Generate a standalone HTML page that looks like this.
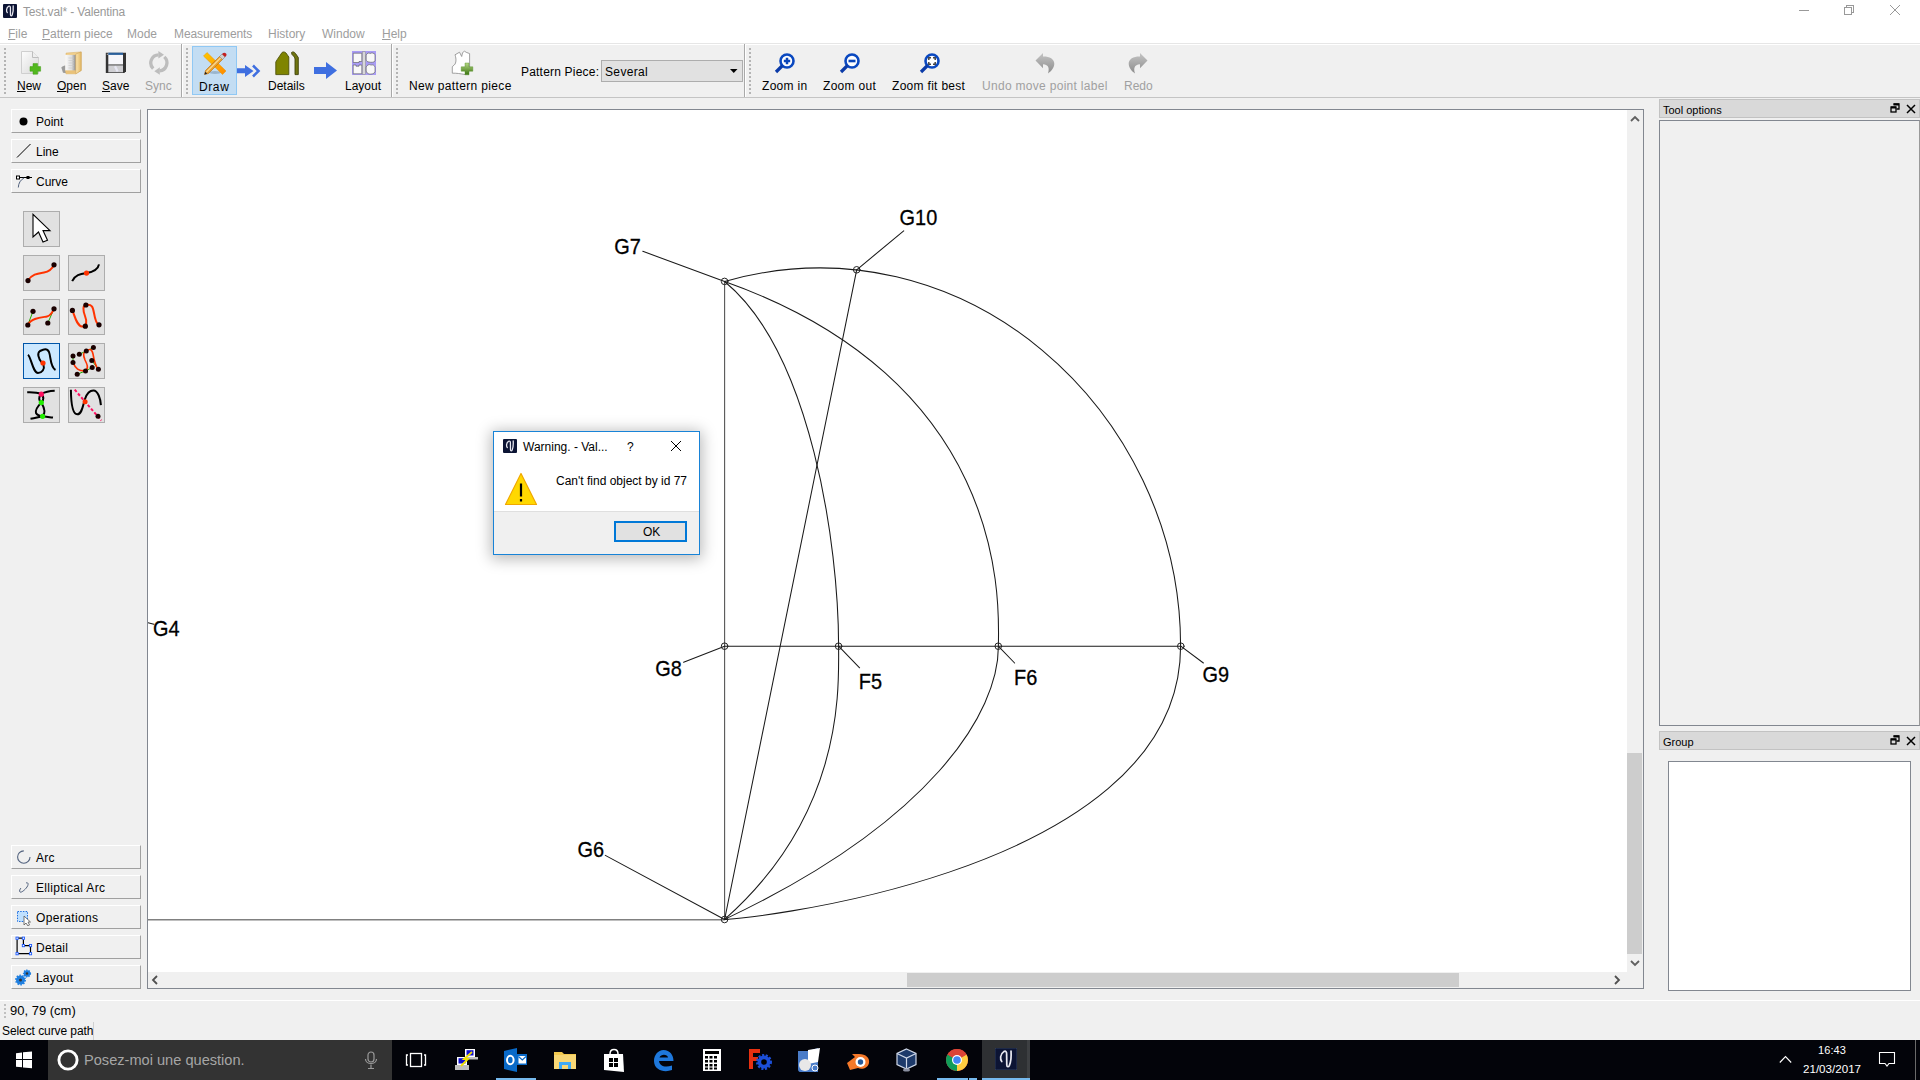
<!DOCTYPE html>
<html><head><meta charset="utf-8">
<style>
*{box-sizing:border-box;margin:0;padding:0}
html,body{width:1920px;height:1080px;overflow:hidden;background:#f0f0f0;font-family:"Liberation Sans",sans-serif;font-size:12px;color:#000}
.a{position:absolute}
.t{position:absolute;white-space:pre;line-height:1}
#titlebar{left:0;top:0;width:1920px;height:44px;background:#fff}
#toolbar{left:0;top:43px;width:1920px;height:55px;background:#f0f0f0;border-top:1px solid #e6e6e6;border-bottom:1px solid #c4c4c4;box-shadow:inset 0 1px 0 #fff}
.handle{position:absolute;width:3px;border-left:2px dotted #b4b4b4}
.sep{position:absolute;top:44px;width:2px;height:53px;border-left:1px solid #a9a9a9;border-right:1px solid #fff}
.tb{position:absolute;font-size:12px;text-align:center}
.u{text-decoration:underline}
.lbtn{position:absolute;left:11px;width:130px;height:24px;background:#f0f0f0;border-top:1px solid #fff;border-left:1px solid #fff;border-right:1px solid #a0a0a0;border-bottom:1px solid #a0a0a0}
.lbtn .t{left:24px;top:6px}
.ibtn{position:absolute;width:37px;height:36px;background:#e1e1e1;border:1px solid #adadad}
.ibtn.sel{background:#cce8ff;border:1px solid #0078d7}
#canvas{left:147px;top:109px;width:1497px;height:880px;background:#fff;border:1px solid #828790}
.dtitle{position:absolute;left:1659px;width:261px;height:19px;background:#d9d9d9;border:1px solid #c2c2c2}
#taskbar{left:0;top:1040px;width:1920px;height:40px;background:#03040a}
</style></head><body>
<div id="titlebar" class="a"></div>
<div id="toolbar" class="a"></div>
<div id="canvas" class="a"></div>
<div id="taskbar" class="a"></div>
<!-- title bar -->
<svg class="a" style="left:3px;top:4px" width="14" height="14" viewBox="0 0 14 14"><rect x="0" y="0" width="14" height="14" rx="1" fill="#0c1434"/><path d="M4.3 8.6 C3.2 7.2 3.1 4 5.6 2.3 C6.9 1.6 7.5 2.6 7.4 4 L7.5 10.8 C7.6 12.3 8.6 12.2 9.2 11 C10 9 10.4 5 10.2 2" stroke="#e8e8f0" stroke-width="1.3" fill="none" stroke-linecap="round"/></svg>
<div class="t" style="left:23px;top:6px;color:#999;letter-spacing:-0.15px">Test.val* - Valentina</div>
<div class="a" style="left:1799px;top:10px;width:10px;height:1px;background:#999"></div>
<div class="a" style="left:1846px;top:5px;width:8px;height:8px;border:1px solid #999"></div>
<div class="a" style="left:1844px;top:7px;width:8px;height:8px;border:1px solid #999;background:#fff"></div>
<svg class="a" style="left:1889px;top:4px" width="12" height="12"><path d="M1 1 L11 11 M11 1 L1 11" stroke="#999" stroke-width="1"/></svg>

<!-- toolbar -->
<div class="handle" style="left:4px;top:48px;height:46px"></div>
<div class="sep" style="left:181px"></div>
<div class="handle" style="left:186px;top:48px;height:46px"></div>
<div class="sep" style="left:391px"></div>
<div class="handle" style="left:396px;top:48px;height:46px"></div>
<div class="sep" style="left:744px"></div>
<div class="handle" style="left:749px;top:48px;height:46px"></div>
<!-- New -->
<svg class="a" style="left:20px;top:50px" width="24" height="26" viewBox="0 0 24 26">
<defs><linearGradient id="pg" x1="0" y1="0" x2="1" y2="1"><stop offset="0" stop-color="#fdfdfd"/><stop offset="1" stop-color="#d8d8d8"/></linearGradient></defs>
<path d="M1.5 1.5 H12.5 L18.5 7.5 V23.5 H1.5 Z" fill="url(#pg)" stroke="#cfcfcf"/>
<path d="M12.5 1.5 V7.5 H18.5" fill="#eee" stroke="#bdbdbd"/>
<path d="M10 16.6 H13 V13.6 H17.6 V16.6 H20.6 V21.2 H17.6 V24.2 H13 V21.2 H10 Z" fill="#52b81e" stroke="#3f9a14" stroke-width="0.5"/>
</svg>
<div class="t" style="left:17px;top:80px"><span class="u">N</span>ew</div>
<!-- Open -->
<svg class="a" style="left:60px;top:50px" width="24" height="26" viewBox="0 0 24 26">
<defs><linearGradient id="ppg" x1="0" y1="0" x2="1" y2="0"><stop offset="0" stop-color="#fbfbfb"/><stop offset="0.6" stop-color="#dedede"/><stop offset="1" stop-color="#8a8a8a"/></linearGradient>
<linearGradient id="fpg" x1="0" y1="0" x2="1" y2="0"><stop offset="0" stop-color="#fde6b0"/><stop offset="1" stop-color="#e2b866"/></linearGradient></defs>
<path d="M1.3 17.5 C3 15.8 5 15.3 6.5 15.5 V23.2 L3 22.8 Z" fill="#8c8c8c" opacity="0.85"/>
<path d="M6 3.1 L21.2 1.9 V20.5 L15.8 23.8 H6 Z" fill="#f1cf8c" stroke="#d8ae64" stroke-width="0.5"/>
<rect x="5.2" y="4.9" width="10.6" height="15.8" fill="url(#ppg)"/>
<path d="M8.5 8 H14 M8.5 10.5 H14 M8.5 13 H14 M8.5 15.5 H14 M8.5 18 H14" stroke="#c8c8c8" stroke-width="0.6"/>
<path d="M5.2 20.6 H15.8 V23.8 H6 Z" fill="#e9c27a"/>
<path d="M15.8 4 L21.2 1.9 V20.5 L15.8 23.8 Z" fill="url(#fpg)" stroke="#c99c52" stroke-width="0.5"/>
</svg>
<div class="t" style="left:57px;top:80px"><span class="u">O</span>pen</div>
<!-- Save -->
<svg class="a" style="left:105px;top:52px" width="22" height="22" viewBox="0 0 22 22">
<path d="M0.8 0.7 H21 V19.3 L19.3 21 H0.8 Z" fill="#333"/>
<rect x="3.3" y="0.7" width="14.7" height="11.8" fill="#f6f6fa"/>
<rect x="3.3" y="0.7" width="14.7" height="2.2" fill="#2a5f9a"/>
<rect x="3.3" y="12.5" width="14.7" height="1" fill="#888"/>
<rect x="3.3" y="13.5" width="14.7" height="6.8" fill="#cfcfd3"/>
<path d="M10 14.2 L12.6 19.6" stroke="#e6e6f2" stroke-width="2.2"/>
<rect x="1.8" y="1.7" width="1" height="1.3" fill="#bbb"/>
</svg>
<div class="t" style="left:102px;top:80px"><span class="u">S</span>ave</div>
<!-- Sync -->
<svg class="a" style="left:148px;top:50px" width="24" height="26" viewBox="0 0 24 26">
<path d="M5.2 18.6 A8 8 0 0 1 10.6 4.9" stroke="#bdbdbd" stroke-width="3.3" fill="none"/>
<path d="M10.4 1 L16 4.8 L10.4 8.6 Z" fill="#bdbdbd"/>
<path d="M16.3 6.9 A8 8 0 0 1 11.6 20.8" stroke="#bdbdbd" stroke-width="3.3" fill="none"/>
<path d="M11.8 17.2 L6.3 21.2 L11.8 24.8 Z" fill="#bdbdbd"/>
</svg>
<div class="t" style="left:145px;top:80px;color:#a0a0a0">Sync</div>
<!-- Draw (checked) -->
<div class="a" style="left:192px;top:46px;width:45px;height:49px;background:#c3ddf3;border:1px solid #90c8f4"></div>
<svg class="a" style="left:202px;top:51px" width="26" height="26" viewBox="0 0 26 26">
<defs><linearGradient id="rg" x1="0" y1="0" x2="1" y2="1"><stop offset="0" stop-color="#ffc800"/><stop offset="1" stop-color="#ff8a00"/></linearGradient>
<linearGradient id="pc" x1="0" y1="0" x2="1" y2="0"><stop offset="0" stop-color="#c8741a"/><stop offset="0.5" stop-color="#f6c46a"/><stop offset="1" stop-color="#d88a20"/></linearGradient></defs>
<ellipse cx="13" cy="21.5" rx="6" ry="1.5" fill="#8aa4bc" opacity="0.7"/>
<path d="M1.5 5 L5 1.5 L24 20 L20.5 23.5 Z" fill="url(#rg)" stroke="#e89000" stroke-width="0.5"/>
<path d="M2.5 23.5 L3.5 19.5 L18 5 L21 8 L6.5 22.5 Z" fill="#e8a030" stroke="#b86a10" stroke-width="0.6"/>
<path d="M4.5 21 L19 6.5" stroke="#f8d890" stroke-width="1.2"/>
<path d="M17.5 5.5 L20 3 L23 6 L20.5 8.5 Z" fill="#cfcfcf" stroke="#777" stroke-width="0.5"/>
<path d="M20 3 C21.5 1.5 23 1.5 24 2.5 C25 3.5 24.5 5 23 6 Z" fill="#c42020"/>
<path d="M2.5 23.5 L3.2 20.8 L5.2 22.8 Z" fill="#222"/>
</svg>
<div class="t" style="left:199px;top:81px;letter-spacing:0.6px">Draw</div>
<!-- arrows -->
<svg class="a" style="left:236px;top:62px" width="26" height="16" viewBox="0 0 26 16">
<path d="M1 6.3 H9 V3 L17.5 9 L9 15 V11.3 H1 Z" fill="#3f6fe0"/>
<path d="M17 3.5 L22.5 9 L17 14.5" stroke="#3f6fe0" stroke-width="2.6" fill="none"/>
</svg>
<svg class="a" style="left:275px;top:51px" width="25" height="25" viewBox="0 0 25 25">
<path d="M0.8 23.6 V11 C1.5 9 3 8 4 6 L7 1.5 C8.5 0.5 10 1 11 2 L13.8 6 V23.6 Z" fill="#7f8400" stroke="#4f520a" stroke-width="0.9"/>
<path d="M16.5 1.5 C17.5 0.5 19.5 0.8 20.5 2.5 L23.3 6.5 V23.6 H20 V8 C20 6.5 18.5 5 17 3.5 Z" fill="#6f7410" stroke="#3f420a" stroke-width="0.9"/>
</svg>
<div class="t" style="left:268px;top:80px">Details</div>
<svg class="a" style="left:313px;top:62px" width="26" height="18" viewBox="0 0 26 18">
<path d="M1 5 H13 V0 L24 8.5 L13 17 V12 H1 Z" fill="#3f6fe0"/>
</svg>
<svg class="a" style="left:352px;top:51px" width="24" height="24" viewBox="0 0 24 24">
<rect x="0" y="0" width="24" height="24" fill="#a99cf5"/>
<path d="M1.2 2.2 H9.8 V10.5 H7 V11.5 H1.2 Z" fill="#f8f8f8" stroke="#555" stroke-width="0.6"/>
<path d="M1.2 14 H4 V15.2 H7 V14 H9.8 V22.8 H1.2 Z" fill="#f8f8f8" stroke="#555" stroke-width="0.6"/>
<rect x="10.5" y="0.8" width="3" height="22.5" fill="#d8d8d8" stroke="#888" stroke-width="0.5"/>
<path d="M14.2 4 C15 2 17 1.5 18 2.5 C19.5 1.5 22 2 23 3.5 V10 C22 11.5 19 11.5 17 11 C15.5 11 14.5 10 14.2 9 Z" fill="#f8f8f8" stroke="#555" stroke-width="0.6"/>
<path d="M14.2 16 C15 14 17 13 19 14 C21 13.5 23 14.5 23 16.5 V21 C22 23 19 23.3 17 23 C15.5 22.5 14.5 21.5 14.2 20 Z" fill="#f8f8f8" stroke="#555" stroke-width="0.6"/>
</svg>
<div class="t" style="left:345px;top:80px">Layout</div>
<!-- New pattern piece -->
<svg class="a" style="left:450px;top:50px" width="26" height="26" viewBox="0 0 26 26">
<defs><linearGradient id="gp" x1="0" y1="0" x2="0" y2="1"><stop offset="0" stop-color="#b8d888"/><stop offset="1" stop-color="#3a7410"/></linearGradient></defs>
<path d="M2.3 23.2 V16.8 C3 15.3 5.2 15.5 5.8 12 C6.3 9.2 5.6 6.5 5 4.8 L9.5 2.2 L11.7 6.5 L12.6 2.6 L14.5 1.2 L16.2 2.3 L19.6 3.6 V18 L15 24.5 C11 23.8 6 23 2.3 23.2 Z" fill="#fff" stroke="#8a8a8a" stroke-width="0.8"/>
<path d="M15 13 H19 V16.8 H22.8 V21.2 H19 V24.8 H15 V21.2 H11.2 V16.8 H15 Z" fill="url(#gp)" stroke="#4a8a1a" stroke-width="0.4"/>
</svg>
<div class="t" style="left:409px;top:80px;letter-spacing:0.35px">New pattern piece</div>
<div class="t" style="left:521px;top:66px;letter-spacing:0.2px">Pattern Piece:</div>
<div class="a" style="left:601px;top:60px;width:142px;height:22px;background:#e1e1e1;border:1px solid #adadad"></div>
<div class="t" style="left:605px;top:66px;letter-spacing:0.35px">Several</div>
<svg class="a" style="left:730px;top:69px" width="8" height="4"><path d="M0 0 H7.5 L3.75 4 Z" fill="#000"/></svg>
<!-- zoom -->
<svg class="a" style="left:774px;top:52px" width="22" height="22" viewBox="0 0 22 22">
<circle cx="13" cy="9" r="6.5" fill="#fff" stroke="#0a48c0" stroke-width="2.6"/>
<path d="M8.5 13.5 L2 20" stroke="#0a3aa8" stroke-width="3.2"/>
<path d="M9.8 9 H16.2 M13 5.8 V12.2" stroke="#0a45b8" stroke-width="2.5"/>
</svg>
<div class="t" style="left:762px;top:80px;letter-spacing:0.3px">Zoom in</div>
<svg class="a" style="left:839px;top:52px" width="22" height="22" viewBox="0 0 22 22">
<circle cx="13" cy="9" r="6.5" fill="#fff" stroke="#0a48c0" stroke-width="2.6"/>
<path d="M8.5 13.5 L2 20" stroke="#0a3aa8" stroke-width="3.2"/>
<path d="M9.5 9 H16.5" stroke="#0a45b8" stroke-width="2.6"/>
</svg>
<div class="t" style="left:823px;top:80px;letter-spacing:0.3px">Zoom out</div>
<svg class="a" style="left:919px;top:52px" width="22" height="22" viewBox="0 0 22 22">
<circle cx="13" cy="9" r="6.5" fill="#fff" stroke="#0a48c0" stroke-width="2.6"/>
<path d="M8.5 13.5 L2 20" stroke="#0a3aa8" stroke-width="3.2"/>
<path d="M9.8 8 V5.8 H12 M14 5.8 H16.2 V8 M16.2 10 V12.2 H14 M12 12.2 H9.8 V10" stroke="#444" stroke-width="1.5" fill="none"/>
</svg>
<div class="t" style="left:892px;top:80px;letter-spacing:0.3px">Zoom fit best</div>
<svg class="a" style="left:1034px;top:52px" width="22" height="22" viewBox="0 0 22 22">
<defs><linearGradient id="ug" x1="0" y1="0" x2="0" y2="1"><stop offset="0" stop-color="#c4c4c4"/><stop offset="1" stop-color="#8c8c8c"/></linearGradient></defs><path d="M1.5 8.4 L9 1 V4.4 C15 4.2 20.5 6.5 20.3 12 C20 16 17 19.5 14 21.4 C15.5 17 15 12.5 9 12.3 V16.2 Z" fill="url(#ug)"/>
</svg>
<div class="t" style="left:982px;top:80px;color:#a0a0a0;letter-spacing:0.3px">Undo move point label</div>
<svg class="a" style="left:1127px;top:52px" width="22" height="22" viewBox="0 0 22 22">
<path d="M20.5 8.4 L13 1 V4.4 C7 4.2 1.5 6.5 1.7 12 C2 16 5 19.5 8 21.4 C6.5 17 7 12.5 13 12.3 V16.2 Z" fill="url(#ug)"/>
</svg>
<div class="t" style="left:1124px;top:80px;color:#a0a0a0">Redo</div>

<!-- left panel -->
<div class="lbtn" style="top:109px"><svg class="a" style="left:7px;top:7px" width="9" height="9"><circle cx="4.5" cy="4.5" r="4" fill="#000"/></svg><div class="t">Point</div></div>
<div class="lbtn" style="top:139px"><svg class="a" style="left:4px;top:3px" width="16" height="16"><path d="M1 14.5 L14.5 1" stroke="#000" stroke-width="1"/></svg><div class="t">Line</div></div>
<div class="lbtn" style="top:169px"><svg class="a" style="left:4px;top:5px" width="18" height="14"><path d="M2 2.5 H16" stroke="#000" stroke-width="1"/><rect x="0.5" y="1" width="3" height="3" fill="#fff" stroke="#000" stroke-width="1"/><rect x="10.5" y="1" width="3" height="3" fill="#000"/><path d="M8 3 C4.5 5 2.5 8 2.3 12.5" stroke="#52627e" stroke-width="1" fill="none"/></svg><div class="t">Curve</div></div>
<div class="ibtn" style="left:23px;top:211px"><svg class="a" style="left:-1px;top:-1px" width="37" height="36"><path d="M10 3.4 L10 26 L15.5 21 L20 31 L24.5 29.3 L20 19.6 L27 19.6 Z" fill="#fff" stroke="#000" stroke-width="1.1" stroke-linejoin="miter"/></svg></div>
<div class="ibtn" style="left:23px;top:255px"><svg class="a" style="left:-1px;top:-1px" width="37" height="36"><path d="M5 25.5 C9 19 15 18.5 21 17.5 C27 16.5 29.5 13 31 9.8" stroke="#ff3300" stroke-width="2" fill="none"/><circle cx="5" cy="25.6" r="2.6" fill="#1a0000"/><circle cx="31" cy="9.8" r="2.6" fill="#1a0000"/></svg></div>
<div class="ibtn" style="left:68px;top:255px"><svg class="a" style="left:-1px;top:-1px" width="37" height="36"><path d="M4.2 26.2 C7 20 12 19 18.5 18.1 C25 17 30 15 31 9.4" stroke="#000" stroke-width="2" fill="none"/><circle cx="18.5" cy="18.1" r="2.6" fill="#ff3300"/></svg></div>
<div class="ibtn" style="left:23px;top:299px"><svg class="a" style="left:-1px;top:-1px" width="37" height="36"><path d="M4.8 26 L10 12.3 M31 9.8 L24.8 24" stroke="#22aa00" stroke-width="1"/><path d="M4.8 26 C8 19 18 18.5 24 17.5 C28 16.8 29.5 13 31 9.8" stroke="#ff3300" stroke-width="2" fill="none"/><circle cx="4.8" cy="26" r="2.6" fill="#1a0000"/><circle cx="31" cy="9.8" r="2.6" fill="#1a0000"/><circle cx="10" cy="12.3" r="2.6" fill="#1a0000"/><circle cx="24.8" cy="24" r="2.6" fill="#1a0000"/></svg></div>
<div class="ibtn" style="left:68px;top:299px"><svg class="a" style="left:-1px;top:-1px" width="37" height="36"><path d="M4.4 11.4 C7 18 9 27 14 27.5 C19 28 19 22 17 17 C15 12 14.5 6 18 6 C24 5 25 8 26 14 C27 20 28 25 31 25.8" stroke="#ff3300" stroke-width="2" fill="none"/><circle cx="4.4" cy="11.4" r="2.6" fill="#1a0000"/><circle cx="17.9" cy="6" r="2.6" fill="#1a0000"/><circle cx="17.3" cy="27.2" r="2.6" fill="#1a0000"/><circle cx="31" cy="25.8" r="2.6" fill="#1a0000"/></svg></div>
<div class="ibtn sel" style="left:23px;top:343px;border-color:#0055a8"><svg class="a" style="left:-1px;top:-1px" width="37" height="36"><path d="M5 11.7 C8 14 10 30 15 30 C19 30 22 26 20.5 22 L19 20 C15 15 14 10 17 8 C21 6 24 5 26 9 C28 14 27 24 32.5 27" stroke="#000" stroke-width="2" fill="none"/><circle cx="20" cy="20" r="2.6" fill="#ff3300"/></svg></div>
<div class="ibtn" style="left:68px;top:343px"><svg class="a" style="left:-1px;top:-1px" width="37" height="36"><path d="M5 12.9 L5 19.6 M11.3 11.3 L25.4 4.6 M23.8 17.5 L30.4 26.3 M17.5 27.9 L24.2 24.6 M17.5 27.9 L9.2 31.3" stroke="#22aa00" stroke-width="1"/><path d="M5 19.6 C8 26 10 28 17.5 27.9 C21 25 19 21 17 17 C15 12 15 9 18.3 7.9 C22 5.5 24 6 25 11 C26 17 27 23 30.4 26.3" stroke="#ff3300" stroke-width="1.6" fill="none"/><circle cx="5" cy="12.9" r="2.5" fill="#1a0000"/><circle cx="5" cy="19.6" r="2.5" fill="#1a0000"/><circle cx="11.3" cy="11.3" r="2.5" fill="#1a0000"/><circle cx="18.3" cy="7.9" r="2.5" fill="#1a0000"/><circle cx="25.4" cy="4.6" r="2.5" fill="#1a0000"/><circle cx="23.8" cy="17.5" r="2.5" fill="#1a0000"/><circle cx="24.2" cy="24.6" r="2.5" fill="#1a0000"/><circle cx="30.4" cy="26.3" r="2.5" fill="#1a0000"/><circle cx="17.5" cy="27.9" r="2.5" fill="#1a0000"/><circle cx="9.2" cy="31.3" r="2.5" fill="#1a0000"/></svg></div>
<div class="ibtn" style="left:23px;top:387px"><svg class="a" style="left:-1px;top:-1px" width="37" height="36"><path d="M4.2 5.2 C10 5 15 5.5 18.3 7 C22 5 27 4 31.7 3.8 M18.3 7 C15 10 16 14 18.3 15.6 C21 13 21 10 18.3 7 M18.3 15.6 C15 19 12 23 13 26 C14 28 17 29 19.6 29.3 C22 27 22 22 18.3 15.6 M7.5 31.8 C12 31 16 30 19.6 29.3 C23 30 27 30.3 30 30.6" stroke="#000" stroke-width="2" fill="none"/><circle cx="18.3" cy="7.2" r="2.6" fill="#ff1060"/><circle cx="18.3" cy="15.6" r="2.6" fill="#22ee00"/><circle cx="19.6" cy="29.3" r="2.6" fill="#22ee00"/></svg></div>
<div class="ibtn" style="left:68px;top:387px"><svg class="a" style="left:-1px;top:-1px" width="37" height="36"><path d="M2.9 2.7 C3 12 4 27 9.2 27.3 C14 27.5 15 18 17 12 C19 6 22 3.5 25.4 3.5 C30 3.5 32.5 12 32.9 18.1" stroke="#000" stroke-width="2" fill="none"/><path d="M6.7 2.7 L33.3 33.5" stroke="#ff1060" stroke-width="2" stroke-dasharray="3 2"/><circle cx="17.1" cy="14.8" r="2.5" fill="#ff3300"/><circle cx="30" cy="29.3" r="2.5" fill="#1a0000"/></svg></div>
<div class="lbtn" style="top:845px"><svg class="a" style="left:4px;top:3px" width="16" height="16"><path d="M7.8 1.9 A6.2 6.2 0 1 0 14 8.1" stroke="#52627e" stroke-width="1.1" fill="none"/></svg><div class="t" style="letter-spacing:0.3px">Arc</div></div>
<div class="lbtn" style="top:875px"><svg class="a" style="left:5px;top:5px" width="14" height="14"><path d="M9 2 C11 1 12 3 10 6 C8 9 4 12 3 11 C2 10 3 8 4 7" stroke="#52627e" stroke-width="1" fill="none"/></svg><div class="t" style="letter-spacing:0.33px">Elliptical Arc</div></div>
<div class="lbtn" style="top:905px"><svg class="a" style="left:4px;top:4px" width="16" height="16"><rect x="1.5" y="1.5" width="10" height="10" fill="#bfe0ff" stroke="#1e6fe0" stroke-width="1" stroke-dasharray="1.5 1.2"/><path d="M8 6 L8 15 L10 13 L12 16 L13.5 15 L12 12 L14.5 12 Z" fill="#fff" stroke="#555" stroke-width="0.8"/></svg><div class="t" style="letter-spacing:0.37px">Operations</div></div>
<div class="lbtn" style="top:935px"><svg class="a" style="left:3px;top:0px" width="18" height="20"><path d="M2.1 2.2 H8.4 V9.6 H15.5 V17.7 H2.1 Z" fill="none" stroke="#000" stroke-width="1.2"/><g fill="#fff" stroke="#1e5bff" stroke-width="0.9"><rect x="1" y="1.1" width="2.2" height="2.2"/><rect x="7.3" y="1.1" width="2.2" height="2.2"/><rect x="7.3" y="8.5" width="2.2" height="2.2"/><rect x="14.4" y="8.5" width="2.2" height="2.2"/><rect x="1" y="16.6" width="2.2" height="2.2"/><rect x="14.4" y="16.6" width="2.2" height="2.2"/></g></svg><div class="t" style="letter-spacing:0.25px">Detail</div></div>
<div class="lbtn" style="top:965px"><svg class="a" style="left:3px;top:3px" width="17" height="17"><circle cx="5.5" cy="11" r="4.5" fill="#1f7fe0" stroke="#1f7fe0" stroke-width="2" stroke-dasharray="1.4 1.4"/><circle cx="5.5" cy="11" r="1.5" fill="#333"/><circle cx="12" cy="4.5" r="3.3" fill="#1f7fe0" stroke="#1f7fe0" stroke-width="1.6" stroke-dasharray="1.2 1.2"/><circle cx="12" cy="4.5" r="1.2" fill="#333"/></svg><div class="t" style="letter-spacing:0.2px">Layout</div></div>


<!-- drawing -->
<svg class="a" style="left:148px;top:110px" width="1479" height="862" viewBox="148 110 1479 862" font-family="Liberation Sans" font-size="20">
<g fill="none" stroke-linecap="round">
<path d="M148 919.8 H724.6" stroke="#808080" stroke-width="1.6"/>
<path d="M724.6 281.4 V919.5" stroke="#555" stroke-width="1.1"/>
<g stroke="#1a1a1a" stroke-width="1.05">
<path d="M724.6 646.2 H1180.8"/>
<path d="M856.7 269.8 L724.6 919.5"/>
<path d="M724.6 281.5 C811.1 352.8 838.6 544.5 838.6 646.2 C838.6 686.2 845.1 812.9 724.6 919.4"/>
<path d="M724.6 281.5 C1014.8 384.4 998.4 613.0 998.4 646.2 C998.4 712.7 931.6 821.4 724.6 919.4"/>
<path d="M724.6 281.5 C963.0 213.7 1180.6 410.6 1180.6 646.2 C1180.6 882.0 715.5 921.8 724.6 919.4"/>
<path d="M642.8 251.3 L724.6 281.4"/>
<path d="M903.7 230.9 L856.7 269.8"/>
<path d="M683.6 662.3 L724.6 646.2"/>
<path d="M859.6 667.8 L838.6 646.2"/>
<path d="M1014.6 663 L998.3 646.2"/>
<path d="M1203.4 663 L1180.8 646.2"/>
<path d="M605.3 855.4 L724.6 919.5"/>
<path d="M148 622.7 L153.9 624.3"/>
</g>
<g stroke="#222" stroke-width="1">
<circle cx="724.6" cy="281.4" r="3.3"/>
<circle cx="856.7" cy="269.8" r="3.3"/>
<circle cx="724.6" cy="646.2" r="3.3"/>
<circle cx="838.6" cy="646.2" r="3.3"/>
<circle cx="998.3" cy="646.2" r="3.3"/>
<circle cx="1180.8" cy="646.2" r="3.3"/>
<circle cx="724.6" cy="919.5" r="3.3"/>
</g>
</g>
<g fill="#000" stroke="#000" stroke-width="0.3" font-size="22">
<text transform="translate(614.3,253.8) scale(0.905,1)">G7</text>
<text transform="translate(899.6,225.2) scale(0.905,1)">G10</text>
<text transform="translate(655.3,676.3) scale(0.905,1)">G8</text>
<text transform="translate(858.8,689.3) scale(0.905,1)">F5</text>
<text transform="translate(1014,684.5) scale(0.905,1)">F6</text>
<text transform="translate(1202.5,682.1) scale(0.905,1)">G9</text>
<text transform="translate(577.5,856.5) scale(0.905,1)">G6</text>
<text transform="translate(152.9,635.7) scale(0.905,1)">G4</text>
</g>
</svg>
<!-- canvas scrollbars -->
<div class="a" style="left:1627px;top:110px;width:16px;height:862px;background:#f0f0f0"></div>
<div class="a" style="left:1627px;top:753px;width:15px;height:201px;background:#cdcdcd"></div>
<svg class="a" style="left:1630px;top:115px" width="10" height="8"><path d="M1 6 L5 2 L9 6" stroke="#606060" stroke-width="1.8" fill="none"/></svg>
<svg class="a" style="left:1630px;top:959px" width="10" height="8"><path d="M1 2 L5 6 L9 2" stroke="#606060" stroke-width="1.8" fill="none"/></svg>
<div class="a" style="left:148px;top:972px;width:1495px;height:16px;background:#f0f0f0"></div>
<div class="a" style="left:907px;top:973px;width:552px;height:14px;background:#cdcdcd"></div>
<svg class="a" style="left:151px;top:975px" width="8" height="10"><path d="M6 1 L2 5 L6 9" stroke="#505050" stroke-width="1.8" fill="none"/></svg>
<svg class="a" style="left:1613px;top:975px" width="8" height="10"><path d="M2 1 L6 5 L2 9" stroke="#505050" stroke-width="1.8" fill="none"/></svg>

<!-- dock -->
<div class="dtitle" style="top:99px"></div>
<div class="t" style="left:1663px;top:104px;font-size:11px;top:105px">Tool options</div>
<svg class="a" style="left:1890px;top:103px" width="10" height="10"><path d="M3.5 1 H9 V6 H6.5" fill="none" stroke="#000" stroke-width="1.3"/><rect x="1" y="4" width="5" height="5" fill="none" stroke="#000" stroke-width="1.3"/><path d="M3.5 1.5 H9" stroke="#000" stroke-width="2"/><path d="M1 4.5 H6" stroke="#000" stroke-width="2"/></svg>
<svg class="a" style="left:1906px;top:104px" width="10" height="10"><path d="M1 1 L9 9 M9 1 L1 9" stroke="#000" stroke-width="1.5"/></svg>
<div class="a" style="left:1659px;top:120px;width:261px;height:606px;border:1px solid #828790;border-right-color:#9a9a9a;background:#f0f0f0"></div>
<div class="dtitle" style="top:731px"></div>
<div class="t" style="left:1663px;font-size:11px;top:737px">Group</div>
<svg class="a" style="left:1890px;top:735px" width="10" height="10"><path d="M3.5 1 H9 V6 H6.5" fill="none" stroke="#000" stroke-width="1.3"/><rect x="1" y="4" width="5" height="5" fill="none" stroke="#000" stroke-width="1.3"/><path d="M3.5 1.5 H9" stroke="#000" stroke-width="2"/><path d="M1 4.5 H6" stroke="#000" stroke-width="2"/></svg>
<svg class="a" style="left:1906px;top:736px" width="10" height="10"><path d="M1 1 L9 9 M9 1 L1 9" stroke="#000" stroke-width="1.5"/></svg>
<div class="a" style="left:1668px;top:761px;width:243px;height:230px;border:1px solid #828790;background:#fff"></div>
<!-- status -->
<div class="a" style="left:0;top:1000px;width:1920px;height:1px;background:#fff"></div>
<div class="a" style="left:4px;top:1004px;width:2px;height:14px;border-left:2px dotted #c0c0c0"></div>
<div class="t" style="left:10px;top:1004px;font-size:13px">90, 79 (cm)</div>
<div class="t" style="left:2px;top:1025px;letter-spacing:-0.08px">Select curve path</div>
<div class="a" style="left:93px;top:1022px;width:1px;height:18px;background:#d0d0d0"></div>

<!-- taskbar -->
<svg class="a" style="left:16px;top:1051px" width="17" height="18"><path d="M0 2.2 L6 1.4 V8 H0 Z M7 1.2 L16 0.6 V8 H7 Z M0 9 H6 V16.3 L0 15.8 Z M7 9 H16 V17.2 L7 16.5 Z" fill="#fff"/></svg>
<div class="a" style="left:48px;top:1040px;width:344px;height:40px;background:#333"></div>
<svg class="a" style="left:57px;top:1049px" width="23" height="23"><circle cx="11" cy="11" r="9.1" fill="none" stroke="#fff" stroke-width="2.9"/></svg>
<div class="t" style="left:84px;top:1053px;font-size:14.6px;color:#a6a6a6">Posez-moi une question.</div>
<svg class="a" style="left:364px;top:1051px" width="14" height="19"><rect x="4" y="1" width="6" height="10" rx="3" fill="none" stroke="#9a9a9a" stroke-width="1.2"/><path d="M1.5 8 C1.5 14 12.5 14 12.5 8 M7 13.5 V17 M4 17.5 H10" stroke="#9a9a9a" stroke-width="1.2" fill="none"/></svg>
<svg class="a" style="left:405px;top:1052px" width="22" height="16"><rect x="5.5" y="1.5" width="11" height="13" fill="none" stroke="#fff" stroke-width="1.3"/><path d="M3 3 H1.5 V13 H3 M19 3 H20.5 V13 H19" fill="none" stroke="#fff" stroke-width="1.3"/></svg>
<svg class="a" style="left:455px;top:1048px" width="24" height="23"><rect x="10" y="1" width="10" height="8" fill="#fff"/><rect x="11.5" y="2.2" width="7" height="5.3" fill="#1010d0"/><rect x="8" y="9" width="15" height="2.5" fill="#c0c0c0"/><rect x="2" y="9" width="10" height="8" fill="#fff"/><rect x="3.5" y="10.2" width="7" height="5.3" fill="#1010d0"/><rect x="0" y="17" width="14" height="5" fill="#c0c0c0"/><path d="M17 4 L9 11 L13 11 L6 18" stroke="#f0e000" stroke-width="1.8" fill="none"/></svg>
<svg class="a" style="left:504px;top:1048px" width="24" height="24"><path d="M0 3 L13 0 V24 L0 21 Z" fill="#0a6ac8"/><rect x="13" y="6" width="10" height="11" fill="#0a6ac8"/><path d="M14.5 8 H22 V15.5 H14.5 Z" fill="#fff"/><path d="M14.5 8.5 L18.3 12 L22 8.5" stroke="#0a6ac8" stroke-width="1.2" fill="none"/><ellipse cx="6.3" cy="12" rx="3.3" ry="4.2" fill="none" stroke="#fff" stroke-width="2"/></svg>
<div class="a" style="left:496px;top:1078px;width:40px;height:2px;background:#76b9ed"></div>
<svg class="a" style="left:554px;top:1050px" width="22" height="20"><path d="M0 2 H8 L10 4 H22 V19 H0 Z" fill="#f3c94f"/><rect x="0" y="5" width="22" height="14" fill="#f8d775"/><path d="M5 19 V12 H17 V19 H14 V15 H8 V19 Z" fill="#3fa9f5"/></svg>
<svg class="a" style="left:603px;top:1048px" width="22" height="25"><path d="M7 6 C7 0 15 0 15 6" stroke="#fff" stroke-width="1.5" fill="none"/><path d="M1 6 H20 L21 24 L1 22 Z" fill="#fff"/><rect x="6" y="10" width="4" height="4" fill="#000"/><rect x="11" y="10" width="4" height="4" fill="#000"/><rect x="6" y="15" width="4" height="4" fill="#000"/><rect x="11" y="15" width="4" height="4" fill="#000"/></svg>
<svg class="a" style="left:653px;top:1049px" width="21" height="23"><path d="M10.5 1 C17 1 20.5 6 20.5 12 H6 C6.5 17 12 19 19 16.5 V21 C11 24 1 21 1 12 C1 6 5 1 10.5 1 Z M6.5 8.5 H15 C14.5 5 8 4.5 6.5 8.5 Z" fill="#1e78dc" fill-rule="evenodd"/></svg>
<svg class="a" style="left:702px;top:1048px" width="20" height="24"><rect x="1" y="1" width="18" height="22" fill="#fff"/><rect x="3" y="3" width="14" height="3" fill="#000"/><g fill="#000"><rect x="3" y="8" width="3" height="2.5"/><rect x="7.5" y="8" width="3" height="2.5"/><rect x="12" y="8" width="3" height="2.5"/><rect x="3" y="12" width="3" height="2.5"/><rect x="7.5" y="12" width="3" height="2.5"/><rect x="12" y="12" width="3" height="2.5"/><rect x="3" y="16" width="3" height="2.5"/><rect x="7.5" y="16" width="3" height="2.5"/><rect x="12" y="16" width="3" height="2.5"/><rect x="3" y="19.5" width="3" height="2"/><rect x="7.5" y="19.5" width="3" height="2"/><rect x="12" y="19.5" width="3" height="2"/></g></svg>
<svg class="a" style="left:749px;top:1049px" width="24" height="22"><path d="M0 0 H11 V4 H4 V8 H9 V12 H4 V20 H0 Z" fill="#e83010"/><circle cx="15" cy="13" r="6.5" fill="#1c4fd8" stroke="#1c4fd8" stroke-width="3" stroke-dasharray="2 1.5"/><circle cx="15" cy="13" r="2.8" fill="#000"/></svg>
<svg class="a" style="left:798px;top:1048px" width="24" height="24"><path d="M0 3 H10 L20 0 V24 H3 C0 24 0 22 0 20 Z" fill="#4a7cc8"/><path d="M10 2 L22 0 L20 14 L10 16 Z" fill="#fff"/><circle cx="7" cy="17" r="6" fill="#e8e8e8"/><circle cx="17" cy="20" r="3" fill="none" stroke="#fff" stroke-width="1"/></svg>
<svg class="a" style="left:846px;top:1050px" width="25" height="20"><path d="M1 13 L9 7 L6 4 L13 4 C20 4 24 8 23 13 C22 18 16 20 12 18 L4 20 Z" fill="#f5792a"/><circle cx="14.5" cy="12" r="5" fill="#fff"/><circle cx="14.5" cy="12" r="2.7" fill="#255a9a"/></svg>
<svg class="a" style="left:896px;top:1048px" width="21" height="24"><path d="M10.5 1 L20 5.5 V16.5 L10.5 21 L1 16.5 V5.5 Z" fill="#1d3a6a" stroke="#cfd8e8" stroke-width="1.2"/><path d="M1 5.5 L10.5 10 L20 5.5 M10.5 10 V21" stroke="#cfd8e8" stroke-width="1.2" fill="none"/><ellipse cx="10.5" cy="22" rx="3.5" ry="1.6" fill="#8a8fa0"/></svg>
<svg class="a" style="left:946px;top:1049px" width="22" height="22"><circle cx="11" cy="11" r="11" fill="#db4437"/><path d="M11 11 L1.5 5.5 A11 11 0 0 0 11 22 Z" fill="#0f9d58"/><path d="M11 11 L11 22 A11 11 0 0 0 20.5 5.5 Z" fill="#ffcd40"/><path d="M11 11 L1.5 5.5 A11 11 0 0 1 20.5 5.5 Z" fill="#db4437"/><circle cx="11" cy="11" r="5" fill="#fff"/><circle cx="11" cy="11" r="3.8" fill="#4285f4"/></svg>
<div class="a" style="left:937px;top:1078px;width:31px;height:2px;background:#76b9ed"></div>
<div class="a" style="left:969px;top:1078px;width:8px;height:2px;background:#76b9ed"></div>
<div class="a" style="left:982px;top:1040px;width:45px;height:40px;background:#2e3033"></div>
<div class="a" style="left:1027px;top:1040px;width:3px;height:40px;background:#3d3f42"></div>
<div class="a" style="left:982px;top:1078px;width:48px;height:2px;background:#76b9ed"></div>
<svg class="a" style="left:995px;top:1048px" width="22" height="22" viewBox="0 0 14 14"><rect x="0" y="0" width="14" height="14" rx="0.8" fill="#0c1434" stroke="#3a4a6a" stroke-width="0.5"/><path d="M4.3 8.6 C3.2 7.2 3.1 4 5.6 2.3 C6.9 1.6 7.5 2.6 7.4 4 L7.5 10.8 C7.6 12.3 8.6 12.2 9.2 11 C10 9 10.4 5 10.2 2" stroke="#e8e8f0" stroke-width="1.1" fill="none" stroke-linecap="round"/></svg>
<svg class="a" style="left:1779px;top:1055px" width="13" height="9"><path d="M0.8 7.5 L6.5 1.5 L12.2 7.5" stroke="#fff" stroke-width="1.1" fill="none"/></svg>
<div class="t" style="left:1818px;top:1045px;color:#fff;font-size:11px;letter-spacing:0.1px">16:43</div>
<div class="t" style="left:1803px;top:1063px;color:#fff;font-size:11.6px">21/03/2017</div>
<svg class="a" style="left:1878px;top:1051px" width="18" height="18"><path d="M1.5 1.5 H16.5 V12.5 H11 L9 15 L7 12.5 H1.5 Z" fill="none" stroke="#fff" stroke-width="1.1"/></svg>
<div class="a" style="left:1915px;top:1040px;width:1px;height:40px;background:#6a6a6a"></div>

<!-- dialog -->
<div class="a" style="left:493px;top:431px;width:207px;height:124px;border:1px solid #1883d7;background:#fff;box-shadow:0 2px 14px 2px rgba(0,0,0,0.28)">
<div class="a" style="left:0;top:79px;width:205px;height:43px;background:#f0f0f0;border-top:1px solid #dfdfdf"></div>
</div>
<svg class="a" style="left:503px;top:439px" width="14" height="14" viewBox="0 0 14 14"><rect x="0" y="0" width="14" height="14" rx="1" fill="#0c1434"/><path d="M4.3 8.6 C3.2 7.2 3.1 4 5.6 2.3 C6.9 1.6 7.5 2.6 7.4 4 L7.5 10.8 C7.6 12.3 8.6 12.2 9.2 11 C10 9 10.4 5 10.2 2" stroke="#e8e8f0" stroke-width="1.3" fill="none" stroke-linecap="round"/></svg>
<div class="t" style="left:523px;top:441px">Warning. - Val...</div>
<div class="t" style="left:627px;top:441px">?</div>
<svg class="a" style="left:670px;top:440px" width="12" height="12"><path d="M1 1 L11 11 M11 1 L1 11" stroke="#000" stroke-width="1"/></svg>
<svg class="a" style="left:504px;top:472px" width="34" height="34"><path d="M17 1.5 L32.5 32.5 H1.5 Z" fill="#ffd800" stroke="#f0a800" stroke-width="1.2" stroke-linejoin="round"/><rect x="15.9" y="11.5" width="2.2" height="13" fill="#000"/><rect x="15.9" y="27" width="2.2" height="2.5" fill="#000"/></svg>
<div class="t" style="left:556px;top:475px">Can't find object by id 77</div>
<div class="a" style="left:614px;top:521px;width:73px;height:21px;background:#e1e1e1;border:2px solid #0078d7"></div>
<div class="t" style="left:643px;top:526px">OK</div>
<!-- menu -->
<div class="t" style="left:8px;top:28px;color:#9d9d9d"><span class="u">F</span>ile</div>
<div class="t" style="left:42px;top:28px;color:#9d9d9d"><span class="u">P</span>attern piece</div>
<div class="t" style="left:127px;top:28px;color:#9d9d9d">Mode</div>
<div class="t" style="left:174px;top:28px;color:#9d9d9d;letter-spacing:-0.1px">Measurements</div>
<div class="t" style="left:268px;top:28px;color:#9d9d9d">History</div>
<div class="t" style="left:322px;top:28px;color:#9d9d9d">Window</div>
<div class="t" style="left:382px;top:28px;color:#9d9d9d"><span class="u">H</span>elp</div>

</body></html>
